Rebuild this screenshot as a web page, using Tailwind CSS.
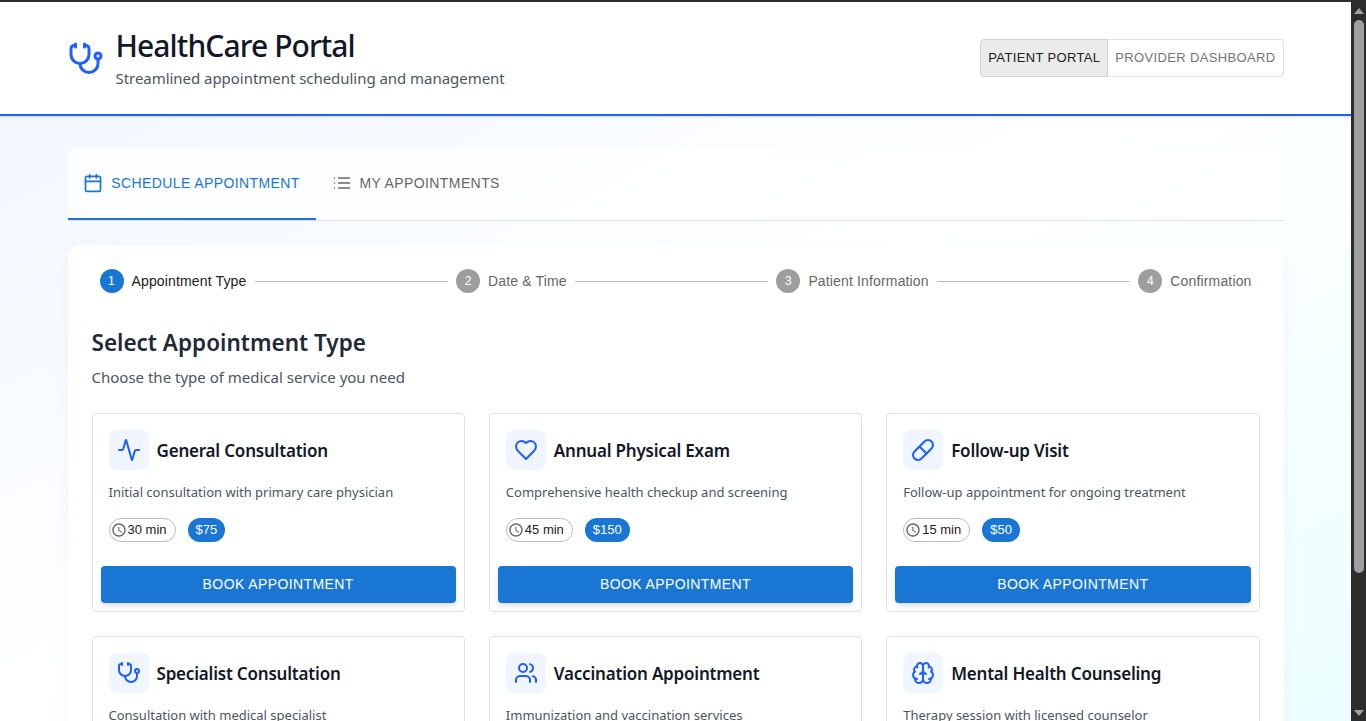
<!DOCTYPE html>
<html lang="en">
<head>
<meta charset="utf-8">
<title>HealthCare Portal</title>
<script src="https://cdn.jsdelivr.net/npm/@tailwindcss/browser@4"></script>
</head>
<body class="h-[721px] overflow-hidden bg-white font-['Liberation_Sans',Arial,sans-serif]">
<div class="h-[2px] bg-[#2e2e2e]"></div>
<div class="flex h-[719px]">
  <!-- page -->
  <div class="w-[1351px] overflow-hidden bg-gradient-to-br from-blue-50 via-white to-cyan-50">
    <header class="h-[114px] bg-white border-b-2 border-[#1f5eff] shadow-sm flex items-center justify-between px-[67.5px]">
      <div class="flex items-center gap-3 pt-[1px]">
        <svg class="w-9 h-9 text-[#1f5eff]" viewBox="0 0 24 24" fill="none" stroke="currentColor" stroke-width="2" stroke-linecap="round" stroke-linejoin="round"><path d="M11 2v2"/><path d="M5 2v2"/><path d="M5 3H4a2 2 0 0 0-2 2v4a6 6 0 0 0 12 0V5a2 2 0 0 0-2-2h-1"/><path d="M8 15a6 6 0 0 0 12 0v-3"/><circle cx="20" cy="10" r="2"/></svg>
        <div>
          <h1 class="font-['Noto_Sans',sans-serif] text-[30px] leading-9 font-medium tracking-[-0.9px] text-[#111827]">HealthCare Portal</h1>
          <p class="font-['Noto_Sans',sans-serif] text-[15px] leading-6 mt-[2px] tracking-[-0.04px] text-[#4b5563]">Streamlined appointment scheduling and management</p>
        </div>
      </div>
      <div class="flex h-[38px] text-[13px] tracking-[0.35px]">
        <div class="flex items-center px-[7px] pb-[1px] bg-[#ebebeb] border border-[#d0d0d0] rounded-l text-[#212121]">PATIENT PORTAL</div>
        <div class="flex items-center px-[7px] pb-[1px] bg-white border border-l-0 border-[#e0e0e0] rounded-r text-[#757575]">PROVIDER DASHBOARD</div>
      </div>
    </header>

    <main class="px-[67.5px] pt-8">
      <nav class="h-[73px] flex bg-white/70 rounded-t-lg border-b border-[#e0e0e0] text-sm tracking-[0.4px]">
        <div class="w-[248px] h-[72px] flex items-center justify-center gap-2 border-b-2 border-[#1976d2] text-[#1976d2]">
          <svg class="w-5 h-5" viewBox="0 0 24 24" fill="none" stroke="currentColor" stroke-width="2" stroke-linecap="round" stroke-linejoin="round"><path d="M8 2v4"/><path d="M16 2v4"/><rect width="18" height="18" x="3" y="4" rx="2"/><path d="M3 10h18"/></svg>
          SCHEDULE APPOINTMENT
        </div>
        <div class="px-4 h-[70px] flex items-center gap-2 text-[#666666]">
          <svg class="w-5 h-5" viewBox="0 0 24 24" fill="none" stroke="currentColor" stroke-width="2" stroke-linecap="round" stroke-linejoin="round"><path d="M3 12h.01"/><path d="M3 18h.01"/><path d="M3 6h.01"/><path d="M8 12h13"/><path d="M8 18h13"/><path d="M8 6h13"/></svg>
          MY APPOINTMENTS
        </div>
      </nav>

      <section class="mt-6 bg-white rounded-xl shadow-lg shadow-slate-200/50 px-6 pt-6 pb-10">
        <!-- stepper -->
        <div class="flex items-center text-sm tracking-[0.15px]">
          <div class="flex items-center gap-2 px-2 text-[#212121]">
            <span class="w-6 h-6 rounded-full bg-[#1976d2] text-white text-xs flex items-center justify-center">1</span>
            Appointment Type
          </div>
          <div class="flex-1 h-px bg-[#bdbdbd]"></div>
          <div class="flex items-center gap-2 px-2 text-[#666666]">
            <span class="w-6 h-6 rounded-full bg-[#9e9e9e] text-white text-xs flex items-center justify-center">2</span>
            Date &amp; Time
          </div>
          <div class="flex-1 h-px bg-[#bdbdbd]"></div>
          <div class="flex items-center gap-2 px-2 text-[#666666]">
            <span class="w-6 h-6 rounded-full bg-[#9e9e9e] text-white text-xs flex items-center justify-center">3</span>
            Patient Information
          </div>
          <div class="flex-1 h-px bg-[#bdbdbd]"></div>
          <div class="flex items-center gap-2 px-2 text-[#666666]">
            <span class="w-6 h-6 rounded-full bg-[#9e9e9e] text-white text-xs flex items-center justify-center">4</span>
            Confirmation
          </div>
        </div>

        <h2 class="mt-[34px] font-['Noto_Sans',sans-serif] text-[22.5px] leading-8 font-semibold text-[#1f2937]">Select Appointment Type</h2>
        <p class="mt-[6px] font-['Noto_Sans',sans-serif] text-[15px] leading-6 text-[#4b5563]">Choose the type of medical service you need</p>

        <div class="mt-6 grid grid-cols-3 gap-6">
          <!-- card -->
          <article class="h-[199px] border border-[#e0e0e0] rounded flex flex-col bg-white">
            <div class="px-4 pt-4">
              <div class="flex items-center gap-2">
                <span class="w-10 h-10 rounded-lg bg-[#eff6ff] flex items-center justify-center"><svg class="w-6 h-6 text-[#1f5eff]" viewBox="0 0 24 24" fill="none" stroke="currentColor" stroke-width="2" stroke-linecap="round" stroke-linejoin="round"><path d="M22 12h-2.48a2 2 0 0 0-1.93 1.46l-2.35 8.36a.25.25 0 0 1-.48 0L9.24 2.18a.25.25 0 0 0-.48 0l-2.35 8.36A2 2 0 0 1 4.49 12H2"/></svg></span>
                <h3 class="font-['Noto_Sans',sans-serif] text-[17px] leading-7 pt-[1px] font-semibold tracking-[-0.2px] text-[#111827]">General Consultation</h3>
              </div>
              <p class="mt-3 font-['Noto_Sans',sans-serif] text-[13px] leading-5 text-[#4b5563]">Initial consultation with primary care physician</p>
              <div class="mt-[16px] flex gap-3 text-[13px]">
                <span class="h-6 rounded-full border border-[#bdbdbd] flex items-center pl-[1px] pr-2 gap-[1px] text-[#212121]"><svg class="w-4 h-4 text-[#616161]" viewBox="0 0 24 24" fill="currentColor"><path d="M11.99 2C6.47 2 2 6.48 2 12s4.47 10 9.99 10C17.52 22 22 17.52 22 12S17.52 2 11.99 2zM12 20c-4.42 0-8-3.58-8-8s3.58-8 8-8 8 3.58 8 8-3.58 8-8 8z"/><path d="M12.5 7H11v6l5.25 3.15.75-1.23-4.5-2.67z"/></svg>30 min</span>
                <span class="h-6 rounded-full bg-[#1976d2] flex items-center px-2 text-white">$75</span>
              </div>
            </div>
            <div class="mt-auto p-2">
              <div class="h-[37px] pb-[1px] rounded bg-[#1976d2] shadow-md flex items-center justify-center text-white text-sm tracking-[0.4px]">BOOK APPOINTMENT</div>
            </div>
          </article>

          <article class="h-[199px] border border-[#e0e0e0] rounded flex flex-col bg-white">
            <div class="px-4 pt-4">
              <div class="flex items-center gap-2">
                <span class="w-10 h-10 rounded-lg bg-[#eff6ff] flex items-center justify-center"><svg class="w-6 h-6 text-[#1f5eff]" viewBox="0 0 24 24" fill="none" stroke="currentColor" stroke-width="2" stroke-linecap="round" stroke-linejoin="round"><path d="M19 14c1.49-1.46 3-3.21 3-5.5A5.5 5.5 0 0 0 16.5 3c-1.76 0-3 .5-4.5 2-1.5-1.5-2.74-2-4.5-2A5.5 5.5 0 0 0 2 8.5c0 2.3 1.5 4.05 3 5.5l7 7Z"/></svg></span>
                <h3 class="font-['Noto_Sans',sans-serif] text-[17px] leading-7 pt-[1px] font-semibold tracking-[-0.2px] text-[#111827]">Annual Physical Exam</h3>
              </div>
              <p class="mt-3 font-['Noto_Sans',sans-serif] text-[13px] leading-5 text-[#4b5563]">Comprehensive health checkup and screening</p>
              <div class="mt-[16px] flex gap-3 text-[13px]">
                <span class="h-6 rounded-full border border-[#bdbdbd] flex items-center pl-[1px] pr-2 gap-[1px] text-[#212121]"><svg class="w-4 h-4 text-[#616161]" viewBox="0 0 24 24" fill="currentColor"><path d="M11.99 2C6.47 2 2 6.48 2 12s4.47 10 9.99 10C17.52 22 22 17.52 22 12S17.52 2 11.99 2zM12 20c-4.42 0-8-3.58-8-8s3.58-8 8-8 8 3.58 8 8-3.58 8-8 8z"/><path d="M12.5 7H11v6l5.25 3.15.75-1.23-4.5-2.67z"/></svg>45 min</span>
                <span class="h-6 rounded-full bg-[#1976d2] flex items-center px-2 text-white">$150</span>
              </div>
            </div>
            <div class="mt-auto p-2">
              <div class="h-[37px] pb-[1px] rounded bg-[#1976d2] shadow-md flex items-center justify-center text-white text-sm tracking-[0.4px]">BOOK APPOINTMENT</div>
            </div>
          </article>

          <article class="h-[199px] border border-[#e0e0e0] rounded flex flex-col bg-white">
            <div class="px-4 pt-4">
              <div class="flex items-center gap-2">
                <span class="w-10 h-10 rounded-lg bg-[#eff6ff] flex items-center justify-center"><svg class="w-6 h-6 text-[#1f5eff]" viewBox="0 0 24 24" fill="none" stroke="currentColor" stroke-width="2" stroke-linecap="round" stroke-linejoin="round"><path d="m10.5 20.5 10-10a4.95 4.95 0 1 0-7-7l-10 10a4.95 4.95 0 1 0 7 7Z"/><path d="m8.5 8.5 7 7"/></svg></span>
                <h3 class="font-['Noto_Sans',sans-serif] text-[17px] leading-7 pt-[1px] font-semibold tracking-[-0.2px] text-[#111827]">Follow-up Visit</h3>
              </div>
              <p class="mt-3 font-['Noto_Sans',sans-serif] text-[13px] leading-5 text-[#4b5563]">Follow-up appointment for ongoing treatment</p>
              <div class="mt-[16px] flex gap-3 text-[13px]">
                <span class="h-6 rounded-full border border-[#bdbdbd] flex items-center pl-[1px] pr-2 gap-[1px] text-[#212121]"><svg class="w-4 h-4 text-[#616161]" viewBox="0 0 24 24" fill="currentColor"><path d="M11.99 2C6.47 2 2 6.48 2 12s4.47 10 9.99 10C17.52 22 22 17.52 22 12S17.52 2 11.99 2zM12 20c-4.42 0-8-3.58-8-8s3.58-8 8-8 8 3.58 8 8-3.58 8-8 8z"/><path d="M12.5 7H11v6l5.25 3.15.75-1.23-4.5-2.67z"/></svg>15 min</span>
                <span class="h-6 rounded-full bg-[#1976d2] flex items-center px-2 text-white">$50</span>
              </div>
            </div>
            <div class="mt-auto p-2">
              <div class="h-[37px] pb-[1px] rounded bg-[#1976d2] shadow-md flex items-center justify-center text-white text-sm tracking-[0.4px]">BOOK APPOINTMENT</div>
            </div>
          </article>

          <article class="h-[199px] border border-[#e0e0e0] rounded bg-white px-4 pt-4">
            <div class="flex items-center gap-2">
              <span class="w-10 h-10 rounded-lg bg-[#eff6ff] flex items-center justify-center"><svg class="w-6 h-6 text-[#1f5eff]" viewBox="0 0 24 24" fill="none" stroke="currentColor" stroke-width="2" stroke-linecap="round" stroke-linejoin="round"><path d="M11 2v2"/><path d="M5 2v2"/><path d="M5 3H4a2 2 0 0 0-2 2v4a6 6 0 0 0 12 0V5a2 2 0 0 0-2-2h-1"/><path d="M8 15a6 6 0 0 0 12 0v-3"/><circle cx="20" cy="10" r="2"/></svg></span>
              <h3 class="font-['Noto_Sans',sans-serif] text-[17px] leading-7 pt-[1px] font-semibold tracking-[-0.2px] text-[#111827]">Specialist Consultation</h3>
            </div>
            <p class="mt-3 font-['Noto_Sans',sans-serif] text-[13px] leading-5 text-[#4b5563]">Consultation with medical specialist</p>
          </article>

          <article class="h-[199px] border border-[#e0e0e0] rounded bg-white px-4 pt-4">
            <div class="flex items-center gap-2">
              <span class="w-10 h-10 rounded-lg bg-[#eff6ff] flex items-center justify-center"><svg class="w-6 h-6 text-[#1f5eff]" viewBox="0 0 24 24" fill="none" stroke="currentColor" stroke-width="2" stroke-linecap="round" stroke-linejoin="round"><path d="M16 21v-2a4 4 0 0 0-4-4H6a4 4 0 0 0-4 4v2"/><circle cx="9" cy="7" r="4"/><path d="M22 21v-2a4 4 0 0 0-3-3.87"/><path d="M16 3.13a4 4 0 0 1 0 7.75"/></svg></span>
              <h3 class="font-['Noto_Sans',sans-serif] text-[17px] leading-7 pt-[1px] font-semibold tracking-[-0.2px] text-[#111827]">Vaccination Appointment</h3>
            </div>
            <p class="mt-3 font-['Noto_Sans',sans-serif] text-[13px] leading-5 text-[#4b5563]">Immunization and vaccination services</p>
          </article>

          <article class="h-[199px] border border-[#e0e0e0] rounded bg-white px-4 pt-4">
            <div class="flex items-center gap-2">
              <span class="w-10 h-10 rounded-lg bg-[#eff6ff] flex items-center justify-center"><svg class="w-6 h-6 text-[#1f5eff]" viewBox="0 0 24 24" fill="none" stroke="currentColor" stroke-width="2" stroke-linecap="round" stroke-linejoin="round"><path d="M12 5a3 3 0 1 0-5.997.125 4 4 0 0 0-2.526 5.77 4 4 0 0 0 .556 6.588A4 4 0 1 0 12 18Z"/><path d="M12 5a3 3 0 1 1 5.997.125 4 4 0 0 1 2.526 5.77 4 4 0 0 1-.556 6.588A4 4 0 1 1 12 18Z"/><path d="M15 13a4.5 4.5 0 0 1-3-4 4.5 4.5 0 0 1-3 4"/><path d="M17.599 6.5a3 3 0 0 0 .399-1.375"/><path d="M6.003 5.125A3 3 0 0 0 6.401 6.5"/><path d="M3.477 10.896a4 4 0 0 1 .585-.396"/><path d="M19.938 10.5a4 4 0 0 1 .585.396"/><path d="M6 18a4 4 0 0 1-1.967-.516"/><path d="M19.967 17.484A4 4 0 0 1 18 18"/></svg></span>
              <h3 class="font-['Noto_Sans',sans-serif] text-[17px] leading-7 pt-[1px] font-semibold tracking-[-0.2px] text-[#111827]">Mental Health Counseling</h3>
            </div>
            <p class="mt-3 font-['Noto_Sans',sans-serif] text-[13px] leading-5 text-[#4b5563]">Therapy session with licensed counselor</p>
          </article>
        </div>
      </section>
    </main>
  </div>

  <!-- scrollbar -->
  <div class="w-[15px] bg-[#2c2c2c] flex flex-col items-center">
    <div class="h-[17px] flex items-center justify-center"><div class="w-0 h-0 border-x-[5px] border-x-transparent border-b-[6px] border-b-[#a0a0a0]"></div></div>
    <div class="w-[10px] h-[553px] mt-[1px] rounded-full bg-[#9f9f9f]"></div>
    <div class="mt-auto h-[17px] flex items-center justify-center"><div class="w-0 h-0 border-x-[5px] border-x-transparent border-t-[6px] border-t-[#a0a0a0]"></div></div>
  </div>
</div>
</body>
</html>
